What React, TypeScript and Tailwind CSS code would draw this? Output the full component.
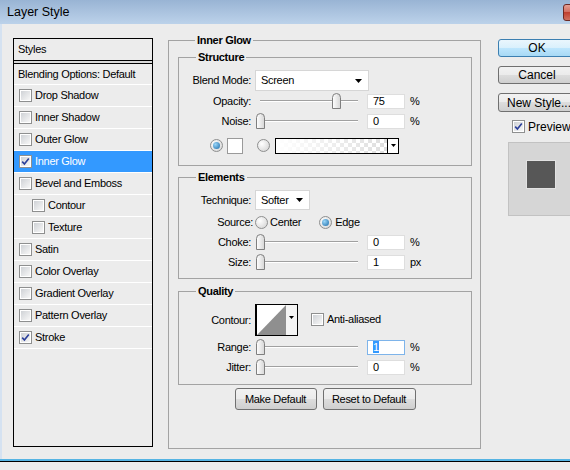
import React from 'react';

const sans = "font-['Liberation_Sans',Arial,sans-serif]";

function Checkbox({ checked = false }: { checked?: boolean }) {
    return (
        <span className="w-[13px] h-[13px] shrink-0 border border-[#8e8f8f] bg-white p-[1px] flex">
            <span className="flex-1 flex items-center justify-center bg-[linear-gradient(135deg,#cfd2d6,#f7f7f7)]">
                {checked && (
                    <svg width="9" height="9" viewBox="0 0 9 9">
                        <path d="M1.2 4.6 L3.4 7 L7.8 1.4" stroke="#2b3f9a" strokeWidth="1.6" fill="none" />
                    </svg>
                )}
            </span>
        </span>
    );
}

function Radio({ checked = false }: { checked?: boolean }) {
    return (
        <span className="w-[13px] h-[13px] shrink-0 rounded-full border border-[#8e8f8f] bg-[radial-gradient(circle_at_35%_35%,#ffffff,#d0d0d0)] flex items-center justify-center">
            {checked && (
                <span className="w-[7px] h-[7px] rounded-full bg-[radial-gradient(circle_at_35%_35%,#9ad6f8,#1a6aa8)]" />
            )}
        </span>
    );
}

function Slider({ pos }: { pos: number }) {
    return (
        <div className="relative w-[106px] h-[16px] shrink-0">
            <div className="absolute left-[4px] right-[4px] top-[7px] h-[2px] border-t border-[#a0a0a0] border-b border-b-white" />
            <svg className="absolute top-0" style={{ left: pos }} width="9" height="16" viewBox="0 0 9 16">
                <defs>
                    <linearGradient id="thumb" x1="0" y1="0" x2="1" y2="0">
                        <stop offset="0" stopColor="#ffffff" />
                        <stop offset="1" stopColor="#d6d6d6" />
                    </linearGradient>
                </defs>
                <path d="M0.5 15.5 V4.5 Q0.5 0.5 4.5 0.5 Q8.5 0.5 8.5 4.5 V15.5 Z" fill="url(#thumb)" stroke="#7f7f7f" />
            </svg>
        </div>
    );
}

function Field({ value, focused = false }: { value: string; focused?: boolean }) {
    return (
        <div className={`w-[38px] h-[15px] shrink-0 bg-white border pl-[5px] flex items-center ${focused ? 'border-[#7eb4ea]' : 'border-[#dedede]'}`}>
            {focused ? <span className="bg-[#3399ff] text-white leading-[12px]">{value}</span> : <span className="leading-[12px]">{value}</span>}
        </div>
    );
}

function Label({ children }: { children: React.ReactNode }) {
    return <div className="w-[72px] shrink-0 text-right">{children}</div>;
}

function SliderRow({ label, pos, value, unit, focused, className = '' }: { label: string; pos: number; value: string; unit: string; focused?: boolean; className?: string }) {
    return (
        <div className={`flex items-center h-[20px] ${className}`}>
            <Label>{label}</Label>
            <div className="ml-[5px]"><Slider pos={pos} /></div>
            <div className="ml-[5px]"><Field value={value} focused={focused} /></div>
            <span className="ml-[5px]">{unit}</span>
        </div>
    );
}

function Select({ value, width }: { value: string; width: string }) {
    return (
        <div className={`${width} h-[21px] bg-white border border-[#d6d6d6] flex items-center justify-between pl-[5px] pr-[6px]`}>
            <span>{value}</span>
            <svg width="7" height="4" viewBox="0 0 7 4"><path d="M0 0 H7 L3.5 4 Z" fill="#000" /></svg>
        </div>
    );
}

function Group({ title, className = '', children }: { title: string; className?: string; children: React.ReactNode }) {
    return (
        <div className={`border border-[#a3a3a3] ${className}`}>
            <div className="-mt-[7px] ml-[17px] w-fit px-[2px] bg-[#ececec] font-bold leading-[13px]">{title}</div>
            {children}
        </div>
    );
}

const styles: { name: string; checked?: boolean; indent?: boolean; active?: boolean }[] = [
    { name: 'Drop Shadow' },
    { name: 'Inner Shadow' },
    { name: 'Outer Glow' },
    { name: 'Inner Glow', checked: true, active: true },
    { name: 'Bevel and Emboss' },
    { name: 'Contour', indent: true },
    { name: 'Texture', indent: true },
    { name: 'Satin' },
    { name: 'Color Overlay' },
    { name: 'Gradient Overlay' },
    { name: 'Pattern Overlay' },
    { name: 'Stroke', checked: true },
];

function WinButton({ label, primary = false, className = '' }: { label: string; primary?: boolean; className?: string }) {
    return (
        <div
            className={`w-[78px] rounded-[3px] border flex items-center justify-center text-[12px] ${
                primary
                    ? 'border-[#3c7fb1] bg-[linear-gradient(#eaf6fd,#d9f0fc_50%,#bee6fd_50%,#a7d9f5)]'
                    : 'border-[#707070] bg-[linear-gradient(#f2f2f2,#ebebeb_50%,#dddddd_50%,#cfcfcf)]'
            } ${className}`}
        >
            {label}
        </div>
    );
}

export default function App() {
    return (
        <div className={`w-[570px] h-[470px] overflow-hidden bg-[#ececec] text-black text-[11px] tracking-[-0.3px] flex flex-col ${sans}`}>
            {/* Title bar */}
            <div className="h-[24px] shrink-0 flex items-center bg-[linear-gradient(#99b4d4,#bcd2ea)] pl-[7px]">
                <span className="text-[12.5px] tracking-normal flex-1">Layer Style</span>
                <div className="w-[43px] h-[17px] mt-[1px] -mr-[36px] rounded-[3px] border border-[#6d2a25] bg-[linear-gradient(#e7a094,#cf6a5c_50%,#c0402f_50%,#d0705e)]" />
            </div>

            {/* Body */}
            <div className="flex-1 flex border-l-2 border-[#d5e2f1] pl-[11px] pt-[14px]">
                {/* Styles list */}
                <div className="w-[140px] h-[409px] shrink-0 border border-black">
                    <div className="h-[22px] border-b border-black pl-[4px] flex items-center">Styles</div>
                    <div className="h-[2px] bg-[#d8d8d8]" />
                    <div className="h-[22px] border-t border-black border-b border-b-white pl-[4px] flex items-center">Blending Options: Default</div>
                    {styles.map((s) => (
                        <div
                            key={s.name}
                            className={`h-[22px] border-b border-white flex items-center gap-[3px] ${s.indent ? 'pl-[18px]' : 'pl-[5px]'} ${s.active ? 'bg-[#3399ff] text-white' : ''}`}
                        >
                            <Checkbox checked={s.checked} />
                            <span>{s.name}</span>
                        </div>
                    ))}
                </div>

                {/* Inner Glow panel */}
                <Group title="Inner Glow" className="ml-[15px] mt-[2px] w-[313px] h-[409px] shrink-0 pl-[9px] pr-[8px]">
                    <Group title="Structure" className="mt-[10px]">
                        <div className="mt-[6px] flex items-center h-[21px]">
                            <Label>Blend Mode:</Label>
                            <div className="ml-[4px]"><Select value="Screen" width="w-[114px]" /></div>
                        </div>
                        <SliderRow label="Opacity:" pos={76} value="75" unit="%" />
                        <SliderRow label="Noise:" pos={0} value="0" unit="%" />
                        <div className="mt-[7px] h-[15px] flex items-center pl-[31px]">
                            <Radio checked />
                            <div className="ml-[4px] w-[16px] h-[16px] bg-white border border-[#9a9a9a]" />
                            <div className="ml-[14px]"><Radio /></div>
                            <div className="ml-[5px] w-[124px] h-[16px] border border-black flex">
                                <div className="flex-1 bg-[image:repeating-conic-gradient(#dedede_0%_25%,#ffffff_0%_50%)] bg-[length:8px_8px]">
                                    <div className="w-full h-full bg-[linear-gradient(to_right,#ffffff,rgba(255,255,255,0))]" />
                                </div>
                                <div className="w-[11px] border-l border-black bg-white flex items-center justify-center">
                                    <svg width="5" height="3" viewBox="0 0 5 3"><path d="M0 0 H5 L2.5 3 Z" fill="#000" /></svg>
                                </div>
                            </div>
                        </div>
                        <div className="h-[12px]" />
                    </Group>

                    <Group title="Elements" className="mt-[11px]">
                        <div className="mt-[6px] flex items-center h-[20px]">
                            <Label>Technique:</Label>
                            <div className="ml-[4px]"><Select value="Softer" width="w-[55px] !h-[20px]" /></div>
                        </div>
                        <div className="mt-[3px] flex items-center h-[19px]">
                            <div className="w-[74px] shrink-0 text-right">Source:</div>
                            <div className="ml-[2px]"><Radio /></div>
                            <span className="ml-[2px]">Center</span>
                            <div className="ml-[18px]"><Radio checked /></div>
                            <span className="ml-[3px]">Edge</span>
                        </div>
                        <SliderRow label="Choke:" pos={0} value="0" unit="%" />
                        <SliderRow label="Size:" pos={0} value="1" unit="px" />
                        <div className="h-[6px]" />
                    </Group>

                    <Group title="Quality" className="mt-[12px]">
                        <div className="mt-[6px] flex items-center h-[32px]">
                            <Label>Contour:</Label>
                            <div className="ml-[4px] w-[43px] h-[32px] border border-black border-l-2 flex">
                                <svg width="29" height="30" viewBox="0 0 29 30" className="bg-white">
                                    <path d="M0 30 L29 0 V30 Z" fill="#8f8f8f" />
                                </svg>
                                <div className="flex-1 bg-[#f4f4f4] flex items-start justify-center pt-[11px]">
                                    <svg width="5" height="3" viewBox="0 0 5 3"><path d="M0 0 H5 L2.5 3 Z" fill="#000" /></svg>
                                </div>
                            </div>
                            <div className="ml-[13px] mb-[1px] flex items-center gap-[3px]">
                                <Checkbox />
                                <span>Anti-aliased</span>
                            </div>
                        </div>
                        <SliderRow label="Range:" pos={0} value="1" unit="%" focused className="mt-[1px]" />
                        <SliderRow label="Jitter:" pos={0} value="0" unit="%" />
                        <div className="h-[7px]" />
                    </Group>

                    <div className="mt-[3px] flex justify-center gap-[6px]">
                        <WinButton label="Make Default" className="!w-[82px] h-[22px] !text-[11px]" />
                        <WinButton label="Reset to Default" className="!w-[93px] h-[22px] !text-[11px]" />
                    </div>
                </Group>

                {/* Right column */}
                <div className="ml-[17px] flex flex-col shrink-0">
                    <WinButton label="OK" primary className="h-[18px] mt-[1px] tracking-normal" />
                    <WinButton label="Cancel" className="h-[18px] mt-[9px] tracking-normal" />
                    <WinButton label="New Style..." className="h-[19px] mt-[9px] !justify-start pl-[8px] tracking-normal" />
                    <div className="mt-[8px] h-[13px] pl-[14px] flex items-center gap-[3px] text-[12px] tracking-normal">
                        <Checkbox checked />
                        <span>Preview</span>
                    </div>
                    <div className="mt-[9px] ml-[10px] w-[72px] h-[74px] bg-[#d6d6d6] border border-[#c2c2c2] pl-[17px] pt-[17px]">
                        <div className="w-[30px] h-[29px] bg-[#575757] border border-[#e2e2e2]" />
                    </div>
                </div>
            </div>

            {/* Bottom frame edge */}
            <div className="h-[2px] shrink-0 bg-[#56b4e3]" />
            <div className="h-[1px] shrink-0 bg-black" />
            <div className="h-[8px] shrink-0 bg-[#ececec]" />
        </div>
    );
}
